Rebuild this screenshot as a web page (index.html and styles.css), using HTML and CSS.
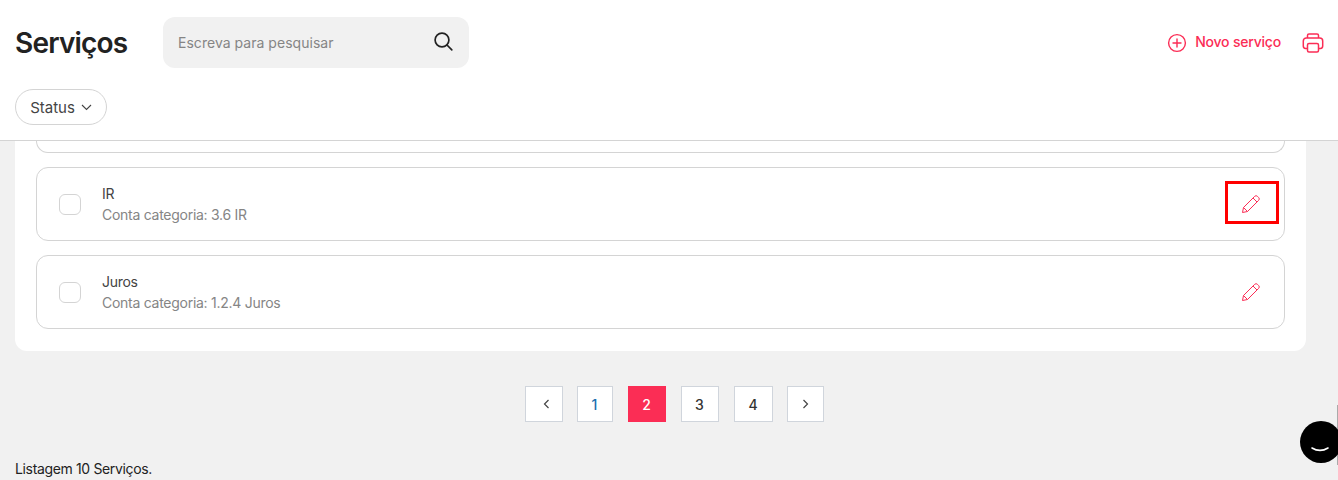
FILE: index.html
```html
<!DOCTYPE html>
<html lang="en">
<head>
  <meta charset="UTF-8">
  <title>Serviços</title>
  <link rel="stylesheet" href="styles.css">
</head>
<body>

<header class="topbar">
  <div class="topbar-row">
    <h1>Serviços</h1>
    <div class="search">
      <span>Escreva para pesquisar</span>
      <svg class="search-icon" width="22" height="22" viewBox="0 0 22 22" fill="none" stroke="#222" stroke-width="1.7" stroke-linecap="round"><circle cx="10" cy="10" r="6.9"/><path d="M15 15l4.8 4.8"/></svg>
    </div>
    <a class="new-btn" href="#">
      <svg width="20" height="20" viewBox="0 0 20 20" fill="none" stroke="#fb2d55" stroke-width="1.4" stroke-linecap="round"><circle cx="10" cy="10" r="8.4"/><path d="M10 6v8M6 10h8"/></svg>
      <span>Novo serviço</span>
    </a>
    <a class="print-btn" href="#">
      <svg width="22" height="22" viewBox="0 0 22 22" fill="none" stroke="#fb2d55" stroke-width="1.5" stroke-linejoin="round"><path d="M5.5 6V3.5a1.5 1.5 0 0 1 1.5-1.5h8a1.5 1.5 0 0 1 1.5 1.5V6"/><path d="M5.5 16.5H3.5A2.5 2.5 0 0 1 1.3 14V9a3 3 0 0 1 3-3h13.4a3 3 0 0 1 3 3v5a2.5 2.5 0 0 1-2.2 2.5h-2"/><rect x="5.5" y="11.5" width="11" height="8.5" rx="1.5"/></svg>
    </a>
  </div>
  <button class="status-btn">
    Status
    <svg width="11" height="7" viewBox="0 0 11 7" fill="none" stroke="#444" stroke-width="1.1"><path d="M1 1l4.5 4.5L10 1"/></svg>
  </button>
</header>

<main>
  <div class="card">
    <div class="item item-cut"></div>

    <div class="item">
      <span class="check"></span>
      <div class="item-text">
        <div class="item-name">IR</div>
        <div class="item-sub">Conta categoria: 3.6 IR</div>
      </div>
      <button class="edit-btn marked">
        <svg width="20" height="20" viewBox="0 0 20 20" fill="none" stroke="#fb2d55" stroke-width="1" stroke-linejoin="round"><path d="M1.5 18.5l1-5L13.6 2.4a2 2 0 0 1 2.9 0l1.1 1.1a2 2 0 0 1 0 2.9L6.5 17.5z"/><path d="M12 4l4 4M2.5 13.5l4 4"/></svg>
      </button>
    </div>

    <div class="item">
      <span class="check"></span>
      <div class="item-text">
        <div class="item-name">Juros</div>
        <div class="item-sub">Conta categoria: 1.2.4 Juros</div>
      </div>
      <button class="edit-btn">
        <svg width="20" height="20" viewBox="0 0 20 20" fill="none" stroke="#fb2d55" stroke-width="1" stroke-linejoin="round"><path d="M1.5 18.5l1-5L13.6 2.4a2 2 0 0 1 2.9 0l1.1 1.1a2 2 0 0 1 0 2.9L6.5 17.5z"/><path d="M12 4l4 4M2.5 13.5l4 4"/></svg>
      </button>
    </div>
  </div>

  <nav class="pages">
    <a class="page page-prev" href="#">
      <svg width="7" height="10" viewBox="0 0 7 10" fill="none" stroke="#444" stroke-width="1.2"><path d="M5.5 1L1.5 5l4 4"/></svg>
    </a>
    <a class="page page-first" href="#">1</a>
    <a class="page active" href="#">2</a>
    <a class="page" href="#">3</a>
    <a class="page page-four" href="#">4</a>
    <a class="page page-last" href="#">
      <svg width="7" height="10" viewBox="0 0 7 10" fill="none" stroke="#444" stroke-width="1.2"><path d="M1.5 1l4 4-4 4"/></svg>
    </a>
  </nav>

  <p class="listing">Listagem 10 Serviços.</p>
</main>

<div class="chat-line"></div>
<div class="chat">
  <svg width="42" height="42" viewBox="0 0 42 42" fill="none"><path d="M12 27c5 3 11 3 16 0" stroke="#fff" stroke-width="1.6" stroke-linecap="round"/></svg>
</div>

</body>
</html>
```

FILE: styles.css
```css
body {
  margin: 0;
  height: 480px;
  overflow: hidden;
  background: #f1f1f1;
  color: #222;
  font-family: Inter, "Liberation Sans", sans-serif;
}

.topbar {
  height: 141px;
  box-sizing: border-box;
  background: #fff;
  padding: 17px 15px 0;
  border-bottom: 1px solid #d4d4d4;
}

.topbar-row {
  display: flex;
  align-items: center;
  height: 51px;
}

h1 {
  margin: 0;
  width: 148px;
  font-size: 28px;
  font-weight: 600;
  letter-spacing: -0.8px;
  color: #222;
}

.search {
  width: 306px;
  height: 51px;
  box-sizing: border-box;
  padding: 0 15px 0 15px;
  background: #f1f1f1;
  border-radius: 12px;
  display: flex;
  align-items: center;
  justify-content: space-between;
  font-size: 14px;
  letter-spacing: 0.03px;
  color: #858585;
}

.search-icon {
  margin-bottom: 3px;
}

.new-btn {
  margin-left: auto;
  display: flex;
  align-items: center;
  gap: 8px;
  color: #fb2d55;
  font-size: 14px;
  font-weight: 500;
  letter-spacing: -0.2px;
  text-decoration: none;
}

.new-btn span {
  margin-bottom: 2px;
}

.print-btn {
  margin-left: 21px;
  margin-right: -1px;
  display: flex;
}

.status-btn {
  margin-top: 21px;
  width: 92px;
  height: 36px;
  padding: 0;
  background: #fff;
  border: 1px solid #d4d4d4;
  border-radius: 18px;
  display: flex;
  align-items: center;
  justify-content: center;
  gap: 6px;
  font-family: inherit;
  font-size: 15px;
  color: #444;
}

main {
  padding: 0 15px;
}

.card {
  width: 1291px;
  box-sizing: border-box;
  background: #fff;
  padding: 0 21px 22px;
  border-radius: 0 0 12px 12px;
  display: flex;
  flex-direction: column;
  gap: 14px;
}

.item {
  height: 74px;
  box-sizing: border-box;
  border: 1px solid #d4d4d4;
  border-radius: 12px;
  display: flex;
  align-items: center;
  padding: 0 5px 0 22px;
}

.item-cut {
  height: 12px;
  border-top: none;
  border-radius: 0 0 12px 12px;
}

.check {
  width: 22px;
  height: 21px;
  box-sizing: border-box;
  border: 1px solid #d4d4d4;
  border-radius: 6px;
}

.item-text {
  margin-left: 21px;
  flex: 1;
  font-size: 14px;
  line-height: 21px;
}

.item-name {
  color: #444;
  letter-spacing: -0.3px;
}

.item-sub {
  color: #858585;
  letter-spacing: -0.27px;
}

.edit-btn {
  width: 54px;
  height: 43px;
  box-sizing: border-box;
  padding: 0 2px 0 0;
  background: none;
  border: 3px solid transparent;
  display: flex;
  align-items: center;
  justify-content: center;
}

.edit-btn.marked {
  margin-bottom: 3px;
  padding-top: 3px;
  border-color: #f00;
}

.pages {
  margin-top: 35px;
  display: flex;
  justify-content: center;
  gap: 15px;
  padding-left: 10px;
}

.page {
  width: 38px;
  height: 36px;
  box-sizing: border-box;
  background: #fff;
  border: 1px solid #d0d5dc;
  display: flex;
  align-items: center;
  justify-content: center;
  font-size: 14px;
  font-weight: 500;
  color: #333;
  text-decoration: none;
}

.page-prev {
  margin-right: -1px;
  padding-left: 6px;
}

.page-first {
  width: 36px;
  color: #1a6fb0;
}

.page-four {
  width: 39px;
  margin-right: -1px;
}

.page-last {
  width: 37px;
}

.page.active {
  background: #fb2d55;
  border-color: #fb2d55;
  color: #fff;
}

.listing {
  margin: 38px 0 0;
  font-size: 14px;
  line-height: 18px;
  letter-spacing: -0.35px;
  color: #222;
}

/* chat widget sits over the page corner */
.chat {
  position: fixed;
  left: 1300px;
  top: 421px;
  width: 42px;
  height: 42px;
  background: #000;
  border-radius: 50%;
}

.chat-line {
  position: fixed;
  right: 0;
  top: 405px;
  width: 1px;
  height: 60px;
  background: #aaa;
}
```
